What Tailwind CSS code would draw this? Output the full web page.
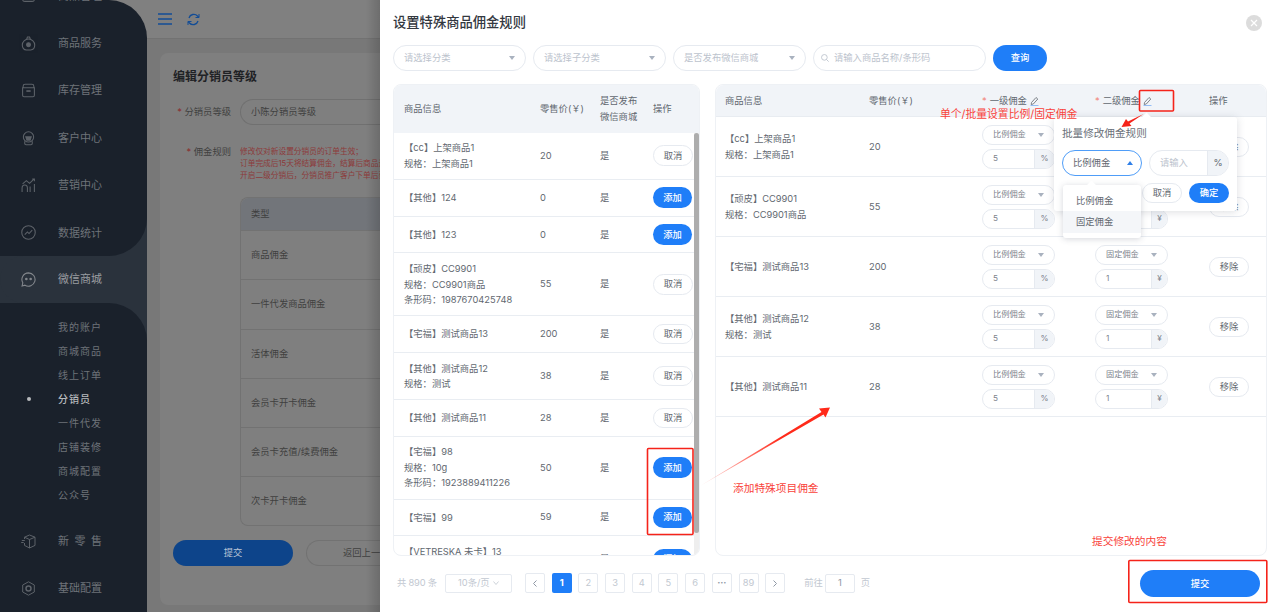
<!DOCTYPE html>
<html lang="zh-CN">
<head>
  <meta charset="UTF-8">
  <title>设置特殊商品佣金规则</title>
  <script src="https://cdn.jsdelivr.net/npm/@tailwindcss/browser@4"></script>
</head>
<body class="m-0 overflow-hidden">
<div class="relative flex w-[1280px] h-[612px] overflow-hidden bg-white font-[Inter,'Noto_Sans_CJK_SC',sans-serif]">

  <!-- Page behind the drawer, already dimmed -->
  <div class="relative flex w-[380px] h-full shrink-0 overflow-hidden bg-[#787878]">
    <!-- Sidebar -->
    <aside class="flex flex-col w-[147px] h-full shrink-0 bg-[linear-gradient(#808080_100px,#2a323c_100px)] text-[#6e7379]">
      <div class="flex flex-col shrink-0 h-[256px] overflow-hidden bg-[#1a212b] rounded-r-[38px]">
        <a class="flex items-center shrink-0 h-[47.4px] -mt-[27.8px] pl-[21px] gap-[22px] text-[11px]">
          <svg class="w-[15px] h-[15px] opacity-80" viewBox="0 0 14 14" fill="none" stroke="currentColor"><rect x="1.500" y="2" width="11" height="10.500" rx="2"/></svg>
          商品管理
        </a>
        <a class="flex items-center shrink-0 h-[47.4px] pl-[21px] gap-[22px] text-[11px]">
          <svg class="w-[15px] h-[15px] opacity-80" viewBox="0 0 14 14" fill="none" stroke="currentColor"><path d="M5.200 3.200 6 1h2l.8 2.200M7 2.800c3.200 0 5.800 2.600 5.800 5.600 0 2.800-1.600 4.600-3.800 4.600H5c-2.200 0-3.800-1.800-3.800-4.600C1.200 5.400 3.800 2.800 7 2.800Z"/><circle cx="7" cy="8.200" r="1.800" fill="currentColor"/></svg>
          商品服务
        </a>
        <a class="flex items-center shrink-0 h-[47.4px] pl-[21px] gap-[22px] text-[11px]">
          <svg class="w-[15px] h-[15px] opacity-80" viewBox="0 0 14 14" fill="none" stroke="currentColor"><path d="M2 4.500V3c0-1 .8-1.800 1.800-1.800h6.400c1 0 1.800.8 1.800 1.800v1.500M1.500 4.500h11V11.500c0 .7-.6 1.300-1.300 1.300H2.800c-.7 0-1.300-.6-1.300-1.300Z"/><path d="M5 7.500h4" stroke-width="1.500"/></svg>
          库存管理
        </a>
        <a class="flex items-center shrink-0 h-[47.4px] pl-[21px] gap-[22px] text-[11px]">
          <svg class="w-[15px] h-[15px] opacity-80" viewBox="0 0 14 14" fill="none" stroke="currentColor"><circle cx="7" cy="5.500" r="4.800"/><path d="M4.500 5.500h5L8.500 8.500h-3Z" fill="currentColor"/><path d="M3.500 9.500v2.200c0 .7.500 1.200 1.200 1.200h4.600c.7 0 1.200-.5 1.200-1.200V9.500"/></svg>
          客户中心
        </a>
        <a class="flex items-center shrink-0 h-[47.4px] pl-[21px] gap-[22px] text-[11px]">
          <svg class="w-[15px] h-[15px] opacity-80" viewBox="0 0 14 14" fill="none" stroke="currentColor"><path d="M1 13V9.500C1 8 2 6.500 3.500 6.500S6 8 6 9.500V13M8.500 13V8M12.500 13V5.500M1.500 5.500 5 2.500l3 2.500 4-4M10.500 1h2v2"/></svg>
          营销中心
        </a>
        <a class="flex items-center shrink-0 h-[47.4px] pl-[21px] gap-[22px] text-[11px]">
          <svg class="w-[15px] h-[15px] opacity-80" viewBox="0 0 14 14" fill="none" stroke="currentColor"><circle cx="7" cy="7" r="6.300"/><path d="M3.500 9 6 6.500l1.500 1.500 3-3.200"/></svg>
          数据统计
        </a>
      </div>
      <a class="flex items-center shrink-0 h-[47px] pl-[21px] gap-[22px] text-[11px] text-[#9a9da1] rounded-l-[24px] bg-[#2a323c]">
        <svg class="w-[15px] h-[15px] opacity-80" viewBox="0 0 14 14" fill="none" stroke="currentColor"><path d="M7 .8a6.200 6.200 0 1 1-3.300 11.500L1 13l.7-2.900A6.200 6.200 0 0 1 7 .8Z"/><circle cx="5" cy="6.500" r=".7" fill="currentColor"/><circle cx="9" cy="6.500" r=".7" fill="currentColor"/></svg>
        微信商城
      </a>
      <div class="flex flex-col flex-1 bg-[#1a212b] rounded-tr-[38px] pt-[12px]">
        <a class="flex items-center shrink-0 h-[24px] pl-[58px] text-[10px] tracking-[1px]">我的账户</a>
        <a class="flex items-center shrink-0 h-[24px] pl-[58px] text-[10px] tracking-[1px]">商城商品</a>
        <a class="flex items-center shrink-0 h-[24px] pl-[58px] text-[10px] tracking-[1px]">线上订单</a>
        <a class="relative flex items-center shrink-0 h-[24px] pl-[58px] text-[10px] tracking-[1px] font-medium text-[#b7babd]">
          <span class="absolute left-[26.500px] w-[4px] h-[4px] rounded-full bg-[#b7babd]"></span>分销员
        </a>
        <a class="flex items-center shrink-0 h-[24px] pl-[58px] text-[10px] tracking-[1px]">一件代发</a>
        <a class="flex items-center shrink-0 h-[24px] pl-[58px] text-[10px] tracking-[1px]">店铺装修</a>
        <a class="flex items-center shrink-0 h-[24px] pl-[58px] text-[10px] tracking-[1px]">商城配置</a>
        <a class="flex items-center shrink-0 h-[24px] pl-[58px] text-[10px] tracking-[1px]">公众号</a>
        <a class="flex items-center shrink-0 h-[47.4px] mt-[10.500px] pl-[21px] gap-[22px] text-[11px]">
          <svg class="w-[15px] h-[15px] opacity-80" viewBox="0 0 15 15" fill="none" stroke="currentColor"><path d="M8.500 1 14 3.200v8.200l-5.500 2.600-5-2.600V9M3.500 5V3.200L8.500 1M3.500 3.200 8.500 5.500 14 3.200M8.500 5.500V14M.8 6.500h3M.2 8.500h2.500"/></svg>
          <span class="flex justify-between w-[44px]"><span>新</span><span>零</span><span>售</span></span>
        </a>
        <a class="flex items-center shrink-0 h-[47.4px] pl-[21px] gap-[22px] text-[11px]">
          <svg class="w-[15px] h-[15px] opacity-80" viewBox="0 0 15 15" fill="none" stroke="currentColor"><path d="M7.500.8 13.300 4v7L7.500 14.200 1.700 11V4Z"/><circle cx="7.500" cy="7.500" r="2.500" stroke-width="1.500"/></svg>
          基础配置
        </a>
      </div>
    </aside>

    <!-- Main -->
    <main class="flex flex-col flex-1 min-w-0">
      <header class="flex items-center shrink-0 h-[39px] pl-[11px] gap-[15px] bg-[#808080] border-b border-[#727272]">
        <svg class="w-[14px] h-[12px]" viewBox="0 0 14 12" fill="none" stroke="#124c96" stroke-width="1.300"><path d="M0 1h14M0 6h14M0 11h14"/></svg>
        <svg class="w-[13px] h-[13px]" viewBox="0 0 13 13" fill="none" stroke="#124c96" stroke-width="1.300"><path d="M2 5A5 5 0 0 1 10.500 3L12 4.500M11 8a5 5 0 0 1-8.500 2L1 8.500"/><path d="M12 1v3.500H8.500M1 12V8.500h3.500" stroke-width="1"/></svg>
      </header>
      <div class="flex-1 ml-[13px] mt-[14px] mb-[7px] w-[300px] rounded-l-lg bg-[#7f7f7f] pl-[13px] pt-[15px] text-[#3f3f40]">
        <h2 class="text-[12px] leading-[18px] font-bold text-[#1f2225]">编辑分销员等级</h2>
        <div class="flex items-center mt-[13px] h-[26px]">
          <label class="w-[58px] text-right text-[9.300px] text-[#3f3f40]"><span class="text-[#8a3232]">*</span> 分销员等级</label>
          <div class="flex items-center w-[200px] h-[26px] ml-[9px] pl-[10px] rounded-l-full border border-r-0 border-[#707070] text-[9.300px]">小陈分销员等级</div>
        </div>
        <div class="flex mt-[21px]">
          <label class="w-[58px] text-right text-[9.300px] leading-[12px] text-[#3f3f40]"><span class="text-[#8a3232]">*</span> 佣金规则</label>
          <div class="w-[200px] ml-[9px] overflow-hidden">
            <div class="text-[7.700px] leading-[12px] text-[#8d3a3a] whitespace-nowrap">
              <p>修改仅对新设置分销员的订单生效；</p>
              <p>订单完成后15天将结算佣金，结算后商品退款不扣除佣金</p>
              <p>开启二级分销后，分销员推广客户下单后获得佣金</p>
            </div>
            <div class="mt-[15px] rounded-tl-lg rounded-bl-lg border border-r-0 border-[#727272] text-[9.300px]">
              <div class="flex items-center h-[32px] pl-[10px] bg-[#72757a] rounded-tl-lg">类型</div>
              <div class="flex items-center h-[49px] pl-[10px] border-t border-[#727272]">商品佣金</div>
              <div class="flex items-center h-[49.500px] pl-[10px] border-t border-[#727272]">一件代发商品佣金</div>
              <div class="flex items-center h-[49px] pl-[10px] border-t border-[#727272]">活体佣金</div>
              <div class="flex items-center h-[49px] pl-[10px] border-t border-[#727272]">会员卡开卡佣金</div>
              <div class="flex items-center h-[49px] pl-[10px] border-t border-[#727272]">会员卡充值/续费佣金</div>
              <div class="flex items-center h-[49.500px] pl-[10px] border-t border-[#727272]">次卡开卡佣金</div>
            </div>
          </div>
        </div>
        <div class="flex mt-[14px] gap-[13px]">
          <div class="flex items-center justify-center w-[120px] h-[26px] rounded-full bg-[#0d448a] text-[9.300px] text-[#b9c5d6]">提交</div>
          <div class="flex items-center w-[80px] h-[26px] pl-[36px] rounded-l-full border border-r-0 border-[#727272] text-[9.300px] whitespace-nowrap overflow-hidden">返回上一页</div>
        </div>
      </div>
    </main>
    <div class="absolute top-0 right-0 w-[14px] h-full bg-gradient-to-l from-black/15 to-transparent"></div>
  </div>

  <!-- Drawer -->
  <section class="flex flex-col w-[900px] h-full shrink-0 bg-white pl-[13px] text-[9.300px] text-[#626870]">
    <div class="flex items-center justify-between shrink-0 h-[45px] pr-[18px]">
      <h1 class="text-[13.300px] font-medium text-[#33383f]">设置特殊商品佣金规则</h1>
      <span class="flex items-center justify-center w-[16px] h-[16px] rounded-full bg-[#dcdcdc]">
        <svg class="w-[8px] h-[8px]" viewBox="0 0 8 8" stroke="#fff" stroke-width="1.200"><path d="M1 1l6 6M7 1 1 7"/></svg>
      </span>
    </div>

    <!-- Filters -->
    <div class="flex shrink-0 h-[26px] gap-[7px] text-[#bcc3cd]">
      <div class="flex items-center justify-between w-[133px] px-[10px] rounded-full border border-[#e6eaf0]">请选择分类<svg class="w-[6px] h-[4px]" viewBox="0 0 6 4" fill="#a9b2bf"><path d="M0 0h6L3 4Z"/></svg></div>
      <div class="flex items-center justify-between w-[133px] px-[10px] rounded-full border border-[#e6eaf0]">请选择子分类<svg class="w-[6px] h-[4px]" viewBox="0 0 6 4" fill="#a9b2bf"><path d="M0 0h6L3 4Z"/></svg></div>
      <div class="flex items-center justify-between w-[133px] px-[10px] rounded-full border border-[#e6eaf0]">是否发布微信商城<svg class="w-[6px] h-[4px]" viewBox="0 0 6 4" fill="#a9b2bf"><path d="M0 0h6L3 4Z"/></svg></div>
      <div class="flex items-center w-[173px] px-[7px] gap-[5px] rounded-full border border-[#e6eaf0]">
        <svg class="w-[8px] h-[8px]" viewBox="0 0 9 9" fill="none" stroke="#bcc3cd"><circle cx="3.800" cy="3.800" r="3.200"/><path d="m6.200 6.200 2.400 2.400"/></svg>
        请输入商品名称/条形码
      </div>
      <div class="flex items-center justify-center w-[54px] rounded-full bg-[#1f7ef8] text-white font-medium">查询</div>
    </div>

    <!-- Tables -->
    <div class="flex shrink-0 h-[472px] mt-[13px] gap-[15px]">
      <div class="flex flex-col w-[307px] h-full overflow-hidden rounded-lg border border-[#eef1f5]">
        <div class="grid grid-cols-[136px_60px_53px_1fr] items-center shrink-0 h-[47.700px] pl-[10px] bg-[#f1f4f8]">
          <span>商品信息</span><span>零售价(￥)</span><span class="leading-[15.500px]">是否发布<br>微信商城</span><span>操作</span>
        </div>
        <div class="flex flex-1 min-h-0">
          <div id="left-rows" class="flex-1 min-w-0 overflow-hidden"></div>
          <div class="w-[5px] shrink-0 bg-[#eeeeee]"><div class="w-full h-[400px] rounded-full bg-[#adadad]"></div></div>
        </div>
      </div>
      <div class="relative flex flex-col w-[552px] h-full rounded-lg border border-[#eef1f5]">
        <div class="grid grid-cols-[144px_113px_113px_114px_1fr] items-center shrink-0 h-[32px] pl-[9px] bg-[#f1f4f8] rounded-t-lg border-b border-[#e8ecf1]">
          <span>商品信息</span><span>零售价(￥)</span>
          <span class="flex items-center"><span class="text-[#f28b82] mr-[3px]">*</span>一级佣金<svg class="w-[9px] h-[10px] ml-[3px]" viewBox="0 0 9 10" fill="none" stroke="#626870" stroke-width=".8"><path d="M1.500 6.500 6 1.500 7.800 3 3.300 8 1.200 8.500Z"/><path d="M.5 9.500h8" stroke="#7eb0f5"/></svg></span>
          <span class="flex items-center"><span class="text-[#f28b82] mr-[3px]">*</span>二级佣金<svg class="w-[9px] h-[10px] ml-[3px]" viewBox="0 0 9 10" fill="none" stroke="#626870" stroke-width=".8"><path d="M1.500 6.500 6 1.500 7.800 3 3.300 8 1.200 8.500Z"/><path d="M.5 9.500h8" stroke="#7eb0f5"/></svg></span>
          <span>操作</span>
        </div>
        <div id="right-rows" class="flex-1 min-h-0"></div>

        <!-- Batch edit popover -->
        <div class="absolute left-[338px] top-[32px] z-10 w-[183px] h-[94px] bg-white rounded-[3px] shadow-[0_1px_8px_rgba(60,70,90,0.18)] pl-[8px] pt-[9px]">
          <div class="absolute -top-[3px] left-[89px] w-[7px] h-[7px] rotate-45 bg-white"></div>
          <p class="text-[10.600px] leading-[16px] text-[#696f78]">批量修改佣金规则</p>
          <div class="flex mt-[8px] gap-[7px] h-[26px]">
            <div class="flex items-center justify-between w-[80px] pl-[10px] pr-[8px] rounded-full border border-[#4f9df8] text-[#5f6670]">比例佣金<svg class="w-[6px] h-[4px]" viewBox="0 0 6 4" fill="#2f7fe8"><path d="M0 4h6L3 0Z"/></svg></div>
            <div class="flex w-[80px] overflow-hidden rounded-full border border-[#e6eaf0]">
              <span class="flex flex-1 items-center pl-[10px] text-[#bcc3cd]">请输入</span>
              <span class="flex items-center justify-center w-[21px] bg-[#f1f4f8] border-l border-[#e6eaf0]">%</span>
            </div>
          </div>
          <div class="flex justify-end mt-[7px] pr-[8px] gap-[7px] h-[20px]">
            <span class="flex items-center justify-center w-[40px] rounded-full border border-[#e6eaf0]">取消</span>
            <span class="flex items-center justify-center w-[40px] rounded-full bg-[#1f7ef8] text-white font-medium">确定</span>
          </div>
          <!-- Select dropdown -->
          <div class="absolute left-[9px] top-[68px] z-20 flex flex-col w-[78px] h-[53px] py-[5px] bg-white rounded-[3px] shadow-[0_1px_6px_rgba(60,70,90,0.22)]">
            <div class="absolute -top-[3px] left-[25px] w-[7px] h-[7px] rotate-45 bg-white"></div>
            <span class="flex items-center h-[21px] pl-[13px]">比例佣金</span>
            <span class="flex items-center h-[22px] pl-[13px] bg-[#f4f6f9]">固定佣金</span>
          </div>
        </div>
      </div>
    </div>

    <!-- Footer -->
    <div class="flex flex-1 min-h-0">
      <div class="flex items-center w-[736px] h-[54px] text-[#c2c8d1]">
        <span class="ml-[4px] w-[48px] whitespace-nowrap tracking-[-0.2px]">共 890 条</span>
        <span class="flex items-center justify-between w-[67px] h-[19px] px-[12px] rounded-[2px] border border-[#e6eaf0]">10条/页<svg class="w-[6px] h-[4px]" viewBox="0 0 6 4" fill="none" stroke="#c2c8d1" stroke-width=".8"><path d="m.5.5 2.500 3 2.500-3"/></svg></span>
        <div class="flex ml-[13px] gap-[6.700px]">
          <span class="flex items-center justify-center w-[20px] h-[20px] rounded-[2px] border border-[#e6eaf0]"><svg class="w-[4px] h-[7px]" viewBox="0 0 4 7" fill="none" stroke="#8f98a5"><path d="M3.500.5.500 3.500l3 3"/></svg></span>
          <span class="flex items-center justify-center w-[20px] h-[20px] rounded-[2px] bg-[#1f7ef8] text-white font-bold">1</span>
          <span class="flex items-center justify-center w-[20px] h-[20px] rounded-[2px] border border-[#e6eaf0]">2</span>
          <span class="flex items-center justify-center w-[20px] h-[20px] rounded-[2px] border border-[#e6eaf0]">3</span>
          <span class="flex items-center justify-center w-[20px] h-[20px] rounded-[2px] border border-[#e6eaf0]">4</span>
          <span class="flex items-center justify-center w-[20px] h-[20px] rounded-[2px] border border-[#e6eaf0]">5</span>
          <span class="flex items-center justify-center w-[20px] h-[20px] rounded-[2px] border border-[#e6eaf0]">6</span>
          <span class="flex items-center justify-center w-[20px] h-[20px] rounded-[2px] border border-[#e6eaf0] text-[#8f98a5] font-bold">···</span>
          <span class="flex items-center justify-center w-[20px] h-[20px] rounded-[2px] border border-[#e6eaf0]">89</span>
          <span class="flex items-center justify-center w-[20px] h-[20px] rounded-[2px] border border-[#e6eaf0]"><svg class="w-[4px] h-[7px]" viewBox="0 0 4 7" fill="none" stroke="#8f98a5"><path d="m.5.5 3 3-3 3"/></svg></span>
        </div>
        <span class="ml-[19px]">前往</span>
        <span class="flex items-center justify-center w-[30px] h-[19px] ml-[2px] rounded-[2px] border border-[#e6eaf0] text-[#8f98a5]">1</span>
        <span class="ml-[6px]">页</span>
      </div>
      <div class="flex items-start pl-[11px]">
        <div class="flex items-center justify-center w-[120px] h-[27px] mt-[14px] rounded-full bg-[#1f7ef8] text-white font-medium">提交</div>
      </div>
    </div>
  </section>

  <!-- Red annotations drawn over the screenshot -->
  <svg class="absolute inset-0 z-30 w-[1280px] h-[612px] pointer-events-none" viewBox="0 0 1280 612" fill="none">
    <defs>
      <linearGradient id="fade" gradientUnits="userSpaceOnUse" x1="700" y1="486" x2="780" y2="437">
        <stop offset="0" stop-color="#ff2a1a" stop-opacity=".12"/>
        <stop offset="1" stop-color="#ff2a1a"/>
      </linearGradient>
    </defs>
    <rect x="1139.500" y="90.500" width="34" height="20.500" rx="1" stroke="#f5231a" stroke-width="1.600"/>
    <rect x="647.500" y="448.500" width="45.500" height="86" rx="1" stroke="#f5231a" stroke-width="1.600"/>
    <rect x="1128.800" y="560.500" width="138" height="42" rx="1" stroke="#f5231a" stroke-width="1.600"/>
    <path d="M700 486 821.500 412 819 408.500 830 407.500 825.500 417.500 823.500 414.500Z" fill="url(#fade)"/>
    <path d="M1143.500 114 1129.500 123.500 1131.500 126 1121.500 127 1126 119 1128 121.500Z" fill="#f5231a"/>
  </svg>
  <span class="absolute z-30 left-[940px] top-[107px] text-[10.800px] leading-[16px] text-[#f9423a] whitespace-nowrap">单个/批量设置比例/固定佣金</span>
  <span class="absolute z-30 left-[733px] top-[481px] text-[10.700px] leading-[16px] text-[#f9423a] whitespace-nowrap">添加特殊项目佣金</span>
  <span class="absolute z-30 left-[1092px] top-[534px] text-[10.700px] leading-[16px] text-[#f9423a] whitespace-nowrap">提交修改的内容</span>
</div>

<script>
  // 左侧商品列表
  const leftRows = [
    [['【cc】上架商品1', '规格：上架商品1'], '20', 0],
    [['【其他】124'], '0', 1],
    [['【其他】123'], '0', 1],
    [['【顽皮】CC9901', '规格：CC9901商品', '条形码：1987670425748'], '55', 0],
    [['【宅福】测试商品13'], '200', 0],
    [['【其他】测试商品12', '规格：测试'], '38', 0],
    [['【其他】测试商品11'], '28', 0],
    [['【宅福】98', '规格：10g', '条形码：1923889411226'], '50', 1],
    [['【宅福】99'], '59', 1],
    [['【VETRESKA 未卡】13', '规格：默认'], '19', 1]
  ];
  document.getElementById('left-rows').innerHTML = leftRows.map(([info, price, add]) => `
    <div class="grid grid-cols-[136px_60px_53px_1fr] items-center py-[7.600px] pl-[10px] border-b border-[#e9edf2]">
      <div class="leading-[15.500px] whitespace-nowrap">${info.join('<br>')}</div>
      <span>${price}</span><span>是</span>
      ${add
        ? '<span class="flex items-center justify-center w-[39px] h-[20.600px] rounded-full bg-[#1f7ef8] text-white font-medium">添加</span>'
        : '<span class="flex items-center justify-center w-[40px] h-[20.600px] rounded-full border border-[#e6eaf0] bg-white">取消</span>'}
    </div>`).join('');

  // 右侧已选商品
  const rightRows = [
    [['【cc】上架商品1', '规格：上架商品1'], '20', '比例佣金', '%', '5', '比例佣金', '%', '5'],
    [['【顽皮】CC9901', '规格：CC9901商品'], '55', '比例佣金', '%', '5', '比例佣金', '¥', '5'],
    [['【宅福】测试商品13'], '200', '比例佣金', '%', '5', '固定佣金', '¥', '1'],
    [['【其他】测试商品12', '规格：测试'], '38', '比例佣金', '%', '5', '固定佣金', '¥', '1'],
    [['【其他】测试商品11'], '28', '比例佣金', '%', '5', '固定佣金', '¥', '1']
  ];
  const cell = (type, unit, val) => `
    <div class="flex flex-col gap-[4px] w-[73px] text-[8.200px] text-[#7d838c]">
      <div class="flex items-center justify-between h-[20px] pl-[10px] pr-[10px] rounded-full border border-[#e6eaf0]">${type}<svg class="w-[6px] h-[4px]" viewBox="0 0 6 4" fill="#a9b2bf"><path d="M0 0h6L3 4Z"/></svg></div>
      <div class="flex h-[20px] overflow-hidden rounded-full border border-[#e6eaf0]">
        <span class="flex flex-1 items-center pl-[10px]">${val}</span>
        <span class="flex items-center justify-center ${unit === '%' ? 'w-[20px]' : 'w-[16px]'} bg-[#f1f4f8] border-l border-[#e6eaf0]">${unit}</span>
      </div>
    </div>`;
  document.getElementById('right-rows').innerHTML = rightRows.map(([info, price, t1, u1, v1, t2, u2, v2]) => `
    <div class="grid grid-cols-[144px_113px_113px_114px_1fr] items-center h-[60px] pl-[9px] border-b border-[#e9edf2]">
      <div class="leading-[15.500px] whitespace-nowrap">${info.join('<br>')}</div>
      <span>${price}</span>
      ${cell(t1, u1, v1)}
      ${cell(t2, u2, v2)}
      <span class="flex items-center justify-center w-[40px] h-[20px] rounded-full border border-[#e6eaf0]">移除</span>
    </div>`).join('');
</script>
</body>
</html>
